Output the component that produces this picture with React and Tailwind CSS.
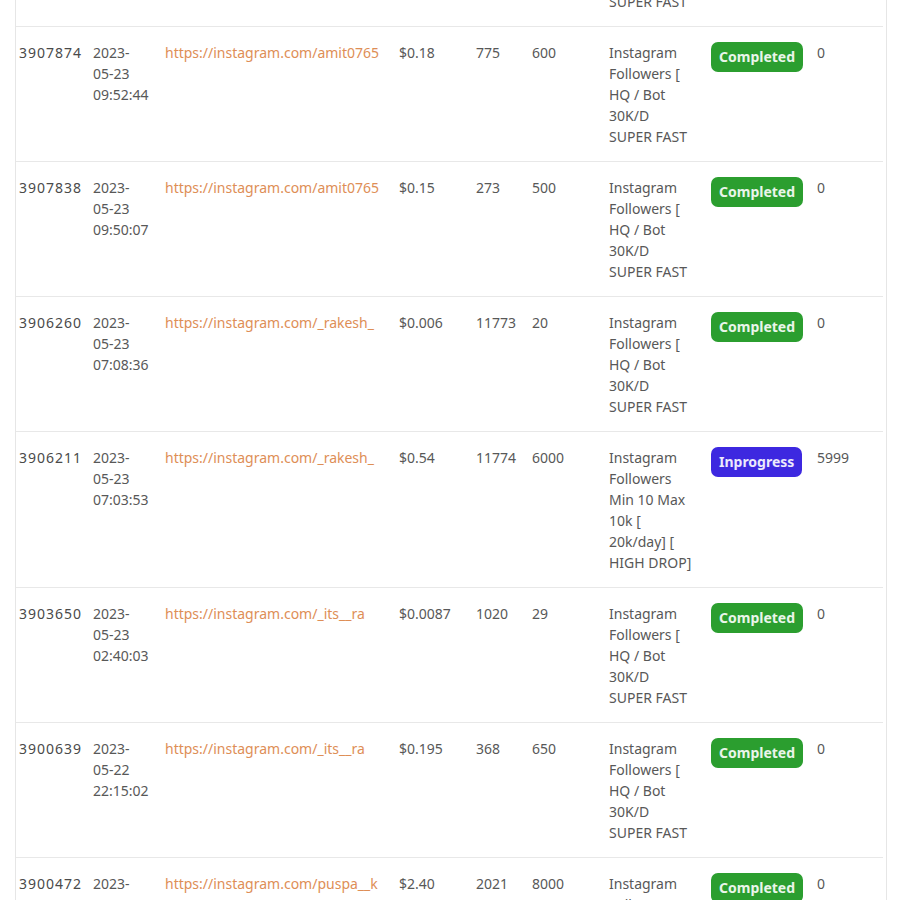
const HQ = ['Instagram', 'Followers [', 'HQ / Bot', '30K/D', 'SUPER FAST'];
const DROP = ['Instagram', 'Followers', 'Min 10 Max', '10k [', '20k/day] [', 'HIGH DROP]'];

const ORDERS = [
  { id: '13908012', date: ['2023-', '05-23', '09:58:10'], link: 'https://instagram.com/amit0765', charge: '$0.15', start: '270', qty: '500', service: HQ, status: 'Completed', remains: '0' },
  { id: '13907874', date: ['2023-', '05-23', '09:52:44'], link: 'https://instagram.com/amit0765', charge: '$0.18', start: '775', qty: '600', service: HQ, status: 'Completed', remains: '0' },
  { id: '13907838', date: ['2023-', '05-23', '09:50:07'], link: 'https://instagram.com/amit0765', charge: '$0.15', start: '273', qty: '500', service: HQ, status: 'Completed', remains: '0' },
  { id: '13906260', date: ['2023-', '05-23', '07:08:36'], link: 'https://instagram.com/_rakesh_', charge: '$0.006', start: '11773', qty: '20', service: HQ, status: 'Completed', remains: '0' },
  { id: '13906211', date: ['2023-', '05-23', '07:03:53'], link: 'https://instagram.com/_rakesh_', charge: '$0.54', start: '11774', qty: '6000', service: DROP, status: 'Inprogress', remains: '5999' },
  { id: '13903650', date: ['2023-', '05-23', '02:40:03'], link: 'https://instagram.com/_its__ra', charge: '$0.0087', start: '1020', qty: '29', service: HQ, status: 'Completed', remains: '0' },
  { id: '13900639', date: ['2023-', '05-22', '22:15:02'], link: 'https://instagram.com/_its__ra', charge: '$0.195', start: '368', qty: '650', service: HQ, status: 'Completed', remains: '0' },
  { id: '13900472', date: ['2023-', '05-22', '21:48:19'], link: 'https://instagram.com/puspa__k', charge: '$2.40', start: '2021', qty: '8000', service: HQ, status: 'Completed', remains: '0' },
];

const Lines = ({ items }) => items.map((l, i) => <div key={i} className="whitespace-nowrap">{l}</div>);

const StatusBadge = ({ status }) => (
  <span
    className={
      status === 'Completed'
        ? 'inline-block rounded-[7px] bg-[#2b9e2f] px-[8px] py-[4px] text-[14px] leading-[22px] font-bold text-white/90'
        : 'inline-block rounded-[7px] bg-[#3d28e0] px-[8px] py-[4px] text-[14px] leading-[22px] font-bold text-white/90'
    }
  >
    {status}
  </span>
);

export default function App() {
  return (
    <div className="h-[900px] overflow-hidden bg-white" style={{ fontFamily: '"Noto Sans", "Open Sans", sans-serif' }}>
      <div className="ml-[15px] w-[872px] h-full border-x border-[#e6e6e6] overflow-hidden">
        <table className="table-fixed border-collapse w-[876px] -ml-[9px] -mt-[108px] text-[14px] leading-[21px] text-[#585858]">
          <colgroup>
            <col className="w-[86px]" />
            <col className="w-[72px]" />
            <col className="w-[234px]" />
            <col className="w-[77px]" />
            <col className="w-[56px]" />
            <col className="w-[77px]" />
            <col className="w-[102px]" />
            <col className="w-[106px]" />
            <col className="w-[66px]" />
          </colgroup>
          <tbody>
            {ORDERS.map((o) => (
              <tr key={o.id} className="border-b border-[#e8e8e8] align-top">
                <td className="pl-[3px] pt-[15px] pb-[14px] whitespace-nowrap tracking-[1px] text-[#4a4a4a]">{o.id}</td>
                <td className="pt-[15px] pb-[14px]"><Lines items={o.date} /></td>
                <td className="pt-[15px] pb-[14px] pr-[8px] overflow-hidden whitespace-nowrap text-[#de8e56]">{o.link}</td>
                <td className="pt-[15px] pb-[14px]">{o.charge}</td>
                <td className="pt-[15px] pb-[14px]">{o.start}</td>
                <td className="pt-[15px] pb-[14px]">{o.qty}</td>
                <td className="pt-[15px] pb-[14px]"><Lines items={o.service} /></td>
                <td className="pt-[15px] pb-[14px]"><StatusBadge status={o.status} /></td>
                <td className="pt-[15px] pb-[14px]">{o.remains}</td>
              </tr>
            ))}
          </tbody>
        </table>
      </div>
    </div>
  );
}
